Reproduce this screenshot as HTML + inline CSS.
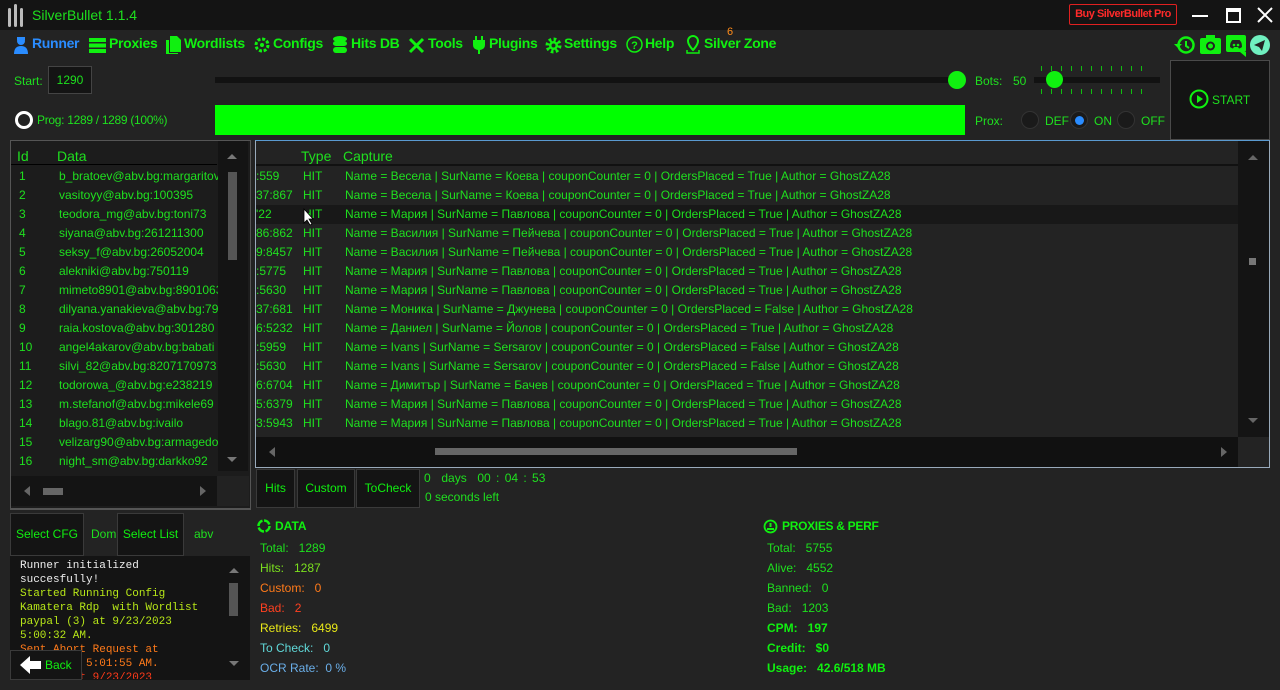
<!DOCTYPE html>
<html><head><meta charset="utf-8"><style>
*{box-sizing:border-box;margin:0;padding:0}
body{width:1280px;height:690px;background:#232323;font-family:"Liberation Sans","DejaVu Sans",sans-serif;color:#1fe01f;position:relative;overflow:hidden;font-size:12px}
.a{position:absolute;white-space:nowrap}
.nav{top:35px;font-weight:bold;font-size:14px;color:#10f010;letter-spacing:-0.3px}
.rows div{height:19px;line-height:19px}
.btn{position:absolute;background:#141414;border:1px solid #3a3a3a;color:#10f010;text-align:center;font-size:12px}
.radio{position:absolute;width:18px;height:18px;border-radius:50%;background:#1a1a1a;border:1px solid #333;top:111px}
.st div{height:20px;line-height:20px;font-size:12px}
.log div{height:14px;line-height:14px}
</style></head><body>
<div class="a" style="left:0;top:0;width:1280px;height:30px;background:#141414"></div>
<svg class="a" style="left:6px;top:3px" width="20" height="24"><g fill="#bbb"><rect x="2" y="5" width="3" height="19" rx="1.5"/><rect x="8" y="1" width="3" height="23" rx="1.5"/><rect x="14" y="5" width="3" height="19" rx="1.5"/></g></svg>
<div class="a" style="left:32px;top:7px;font-size:14px;color:#1ee01e">SilverBullet 1.1.4</div>
<div class="a" style="left:1069px;top:4px;width:108px;height:21px;border:1px solid #e02020;border-radius:2px;color:#ff2a2a;font-weight:bold;font-size:11px;line-height:19px;text-align:center;letter-spacing:-0.5px">Buy SilverBullet Pro</div>
<div class="a" style="left:1192px;top:15px;width:16px;height:2px;background:#fff"></div>
<div class="a" style="left:1226px;top:8px;width:15px;height:15px;border:2px solid #fff;border-top-width:4px"></div>
<svg class="a" style="left:1257px;top:7px" width="16" height="16"><path d="M1 1L15 15M15 1L1 15" stroke="#fff" stroke-width="2"/></svg>
<svg class="a" style="left:13px;top:36px" width="16" height="18"><circle cx="8" cy="5" r="4" fill="#2a8cff"/><rect x="4" y="1" width="8" height="3" fill="#2a8cff"/><path d="M1 18Q1 10 8 10Q15 10 15 18Z" fill="#2a8cff"/></svg>
<div class="a nav" style="left:32px;color:#2a8cff">Runner</div>
<svg class="a" style="left:89px;top:38px" width="17" height="15"><g fill="#10f010"><rect y="0" width="17" height="4"/><rect y="5.5" width="17" height="4"/><rect y="11" width="17" height="4"/></g></svg>
<div class="a nav" style="left:109px">Proxies</div>
<svg class="a" style="left:166px;top:36px" width="15" height="18"><path d="M4 0h7l4 4v12H4z M0 4h3v13h9v1H0z" fill="#10f010"/></svg>
<div class="a nav" style="left:184px">Wordlists</div>
<svg class="a" style="left:254px;top:37px" width="16" height="16"><circle cx="8" cy="8" r="6" fill="none" stroke="#10f010" stroke-width="3" stroke-dasharray="3 1.7"/><circle cx="8" cy="8" r="2" fill="#10f010"/></svg>
<div class="a nav" style="left:273px">Configs</div>
<svg class="a" style="left:333px;top:36px" width="14" height="18"><g fill="#10f010"><ellipse cx="7" cy="3" rx="7" ry="3"/><rect y="5" width="14" height="5" rx="3"/><rect y="11" width="14" height="6" rx="3"/></g></svg>
<div class="a nav" style="left:351px">Hits DB</div>
<svg class="a" style="left:408px;top:37px" width="17" height="17"><path d="M2 2L15 15M15 2L2 15" stroke="#10f010" stroke-width="3"/></svg>
<div class="a nav" style="left:428px">Tools</div>
<svg class="a" style="left:472px;top:36px" width="14" height="18"><path d="M4 0v4M10 0v4" stroke="#10f010" stroke-width="2"/><path d="M1 4h12v5q0 4-5 5v4H6v-4q-5-1-5-5z" fill="#10f010"/></svg>
<div class="a nav" style="left:489px">Plugins</div>
<svg class="a" style="left:545px;top:37px" width="17" height="17"><circle cx="8.5" cy="8.5" r="6" fill="none" stroke="#10f010" stroke-width="4" stroke-dasharray="2.5 2.2"/><circle cx="8.5" cy="8.5" r="4.5" fill="#10f010"/><circle cx="8.5" cy="8.5" r="2" fill="#232323"/></svg>
<div class="a nav" style="left:564px">Settings</div>
<svg class="a" style="left:626px;top:36px" width="17" height="17"><circle cx="8.5" cy="8.5" r="7.5" fill="none" stroke="#10f010" stroke-width="1.5"/><text x="8.5" y="13" font-size="11" font-weight="bold" fill="#10f010" text-anchor="middle" font-family="Liberation Sans">?</text></svg>
<div class="a nav" style="left:645px">Help</div>
<svg class="a" style="left:686px;top:35px" width="14" height="19"><path d="M7 1a5 5 0 0 1 5 5c0 4-5 9-5 9s-5-5-5-9a5 5 0 0 1 5-5z" fill="none" stroke="#10f010" stroke-width="2"/><path d="M1 15v3h12v-3" fill="none" stroke="#10f010" stroke-width="1.5"/></svg>
<div class="a nav" style="left:704px">Silver Zone</div>
<div class="a" style="left:727px;top:26px;color:#ff8c1a;font-size:11px">6</div>
<svg class="a" style="left:1174px;top:35px" width="22" height="20"><circle cx="12" cy="10" r="7.5" fill="none" stroke="#10f010" stroke-width="2.5"/><path d="M12 6v5l3 2" stroke="#10f010" stroke-width="2" fill="none"/><path d="M0 9l4 4 4-4z" fill="#10f010"/></svg>
<svg class="a" style="left:1200px;top:35px" width="21" height="19"><rect x="0" y="3" width="21" height="16" rx="2" fill="#10f010"/><rect x="6" y="0" width="9" height="4" fill="#10f010"/><circle cx="10.5" cy="11" r="4.5" fill="#232323"/><circle cx="10.5" cy="11" r="2.5" fill="#10f010"/></svg>
<svg class="a" style="left:1226px;top:35px" width="20" height="22"><rect width="20" height="17" rx="2" fill="#10f010"/><path d="M14 17l6 5v-5z" fill="#10f010"/><path d="M4 12q0-5 2.5-7h7q2.5 2 2.5 7-2 1.5-3 1.5l-1-1.5h-4l-1 1.5q-1 0-3-1.5z" fill="#232323"/><circle cx="8" cy="10" r="1.3" fill="#10f010"/><circle cx="12" cy="10" r="1.3" fill="#10f010"/></svg>
<svg class="a" style="left:1250px;top:35px" width="20" height="20"><circle cx="10" cy="10" r="10" fill="#70f0c0"/><path d="M4 10l11-5-3 11-3-4z" fill="#232323"/></svg>
<div class="a" style="left:14px;top:74px;font-size:12px">Start:</div>
<div class="a" style="left:48px;top:66px;width:44px;height:28px;background:#141414;border:1px solid #444;color:#1ee01e;font-size:12px;line-height:26px;text-align:center">1290</div>
<div class="a" style="left:215px;top:77px;width:745px;height:6px;background:#121212"></div>
<div class="a" style="left:948px;top:71px;width:18px;height:18px;border-radius:50%;background:#10f010"></div>
<div class="a" style="left:975px;top:74px;font-size:12px">Bots:</div>
<div class="a" style="left:1013px;top:74px;font-size:12px">50</div>
<div class="a" style="left:1034px;top:77px;width:126px;height:6px;background:#121212"></div>
<div class="a" style="left:1041px;top:66px;width:110px;height:5px;background:repeating-linear-gradient(90deg,#10c010 0 1px,transparent 1px 10px)"></div>
<div class="a" style="left:1041px;top:89px;width:110px;height:5px;background:repeating-linear-gradient(90deg,#10c010 0 1px,transparent 1px 10px)"></div>
<div class="a" style="left:1046px;top:71px;width:17px;height:17px;border-radius:50%;background:#10f010"></div>
<div class="a" style="left:1170px;top:60px;width:100px;height:80px;background:#141414;border:1px solid #4a4a4a"></div>
<svg class="a" style="left:1189px;top:89px" width="20" height="20"><circle cx="10" cy="10" r="8.5" fill="none" stroke="#10f010" stroke-width="2"/><path d="M8 6l6 4-6 4z" fill="#10f010"/></svg>
<div class="a" style="left:1212px;top:93px;font-size:12px">START</div>
<div class="a" style="left:15px;top:111px;width:18px;height:18px;border-radius:50%;border:3px solid #fff"></div>
<div class="a" style="left:37px;top:113px;font-size:12px;letter-spacing:-0.3px">Prog: 1289 / 1289 (100%)</div>
<div class="a" style="left:215px;top:105px;width:750px;height:30px;background:#00ff00"></div>
<div class="a" style="left:975px;top:114px;font-size:12px">Prox:</div>
<div class="radio" style="left:1021px"></div><div class="a" style="left:1045px;top:114px">DEF</div>
<div class="radio" style="left:1070px"></div><div class="a" style="left:1075px;top:116px;width:9px;height:9px;border-radius:50%;background:#2a8cff"></div><div class="a" style="left:1094px;top:114px">ON</div>
<div class="radio" style="left:1117px"></div><div class="a" style="left:1141px;top:114px">OFF</div>
<div class="a" style="left:10px;top:140px;width:241px;height:369px;background:#1c1c1c;border:1px solid #555"></div>
<div class="a" style="left:218px;top:141px;width:30px;height:330px;background:#141414"></div>
<div class="a" style="left:228px;top:172px;width:9px;height:88px;background:#555"></div>
<svg class="a" style="left:226px;top:152px" width="12" height="8"><path d="M1 7l5-5 5 5z" fill="#777"/></svg>
<svg class="a" style="left:226px;top:456px" width="12" height="8"><path d="M1 1l5 5 5-5z" fill="#777"/></svg>
<div class="a" style="left:11px;top:164px;width:206px;height:1px;background:#000"></div>
<div class="a" style="left:17px;top:148px;font-size:14px">Id</div>
<div class="a" style="left:57px;top:148px;font-size:14px">Data</div>
<div class="a rows" style="left:19px;top:167px;width:200px;height:304px;overflow:hidden;font-size:12px">
<div>1</div><div>2</div><div>3</div><div>4</div><div>5</div><div>6</div><div>7</div><div>8</div><div>9</div><div>10</div><div>11</div><div>12</div><div>13</div><div>14</div><div>15</div><div>16</div><div>17</div></div>
<div class="a rows" style="left:59px;top:167px;width:159px;height:304px;overflow:hidden;font-size:12px">
<div>b_bratoev@abv.bg:margaritov</div><div>vasitoyy@abv.bg:100395</div><div>teodora_mg@abv.bg:toni73</div><div>siyana@abv.bg:261211300</div><div>seksy_f@abv.bg:26052004</div><div>alekniki@abv.bg:750119</div><div>mimeto8901@abv.bg:8901063</div><div>dilyana.yanakieva@abv.bg:796</div><div>raia.kostova@abv.bg:301280</div><div>angel4akarov@abv.bg:babati</div><div>silvi_82@abv.bg:8207170973</div><div>todorowa_@abv.bg:e238219</div><div>m.stefanof@abv.bg:mikele69</div><div>blago.81@abv.bg:ivailo</div><div>velizarg90@abv.bg:armagedon</div><div>night_sm@abv.bg:darkko92</div><div>Bafa1a@abv.bg:bat</div></div>
<div class="a" style="left:11px;top:476px;width:206px;height:30px;background:#141414"></div>
<div class="a" style="left:217px;top:476px;width:32px;height:30px;background:#222"></div>
<svg class="a" style="left:23px;top:486px" width="8" height="10"><path d="M7 0v10L1 5z" fill="#666"/></svg>
<svg class="a" style="left:199px;top:486px" width="8" height="10"><path d="M1 0v10l6-5z" fill="#666"/></svg>
<div class="a" style="left:43px;top:488px;width:20px;height:7px;background:#666"></div>
<div class="a" style="left:10px;top:508px;width:241px;height:2px;background:#555"></div>
<div class="a" style="left:255px;top:140px;width:1015px;height:328px;background:#232323;border:1px solid #9ab;border-top-color:#5a9ad0"></div>
<div class="a" style="left:1238px;top:141px;width:31px;height:296px;background:#141414"></div>
<svg class="a" style="left:1247px;top:153px" width="12" height="8"><path d="M1 7l5-5 5 5z" fill="#666"/></svg>
<svg class="a" style="left:1247px;top:417px" width="12" height="8"><path d="M1 1l5 5 5-5z" fill="#666"/></svg>
<div class="a" style="left:1249px;top:258px;width:7px;height:7px;background:#777"></div>
<div class="a" style="left:256px;top:164px;width:982px;height:2px;background:#111"></div>
<div class="a" style="left:256px;top:205px;width:982px;height:19px;background:#181818"></div>
<div class="a" style="left:301px;top:148px;font-size:14px">Type</div>
<div class="a" style="left:343px;top:148px;font-size:14px">Capture</div>
<div class="a rows" style="left:256px;top:167px;width:45px;overflow:hidden;font-size:12px">
<div>:559</div><div>37:867</div><div>'22</div><div>86:862</div><div>9:8457</div><div>:5775</div><div>:5630</div><div>37:681</div><div>6:5232</div><div>:5959</div><div>:5630</div><div>6:6704</div><div>5:6379</div><div>3:5943</div></div>
<div class="a rows" style="left:303px;top:167px;font-size:12px"><div>HIT</div><div>HIT</div><div>HIT</div><div>HIT</div><div>HIT</div><div>HIT</div><div>HIT</div><div>HIT</div><div>HIT</div><div>HIT</div><div>HIT</div><div>HIT</div><div>HIT</div><div>HIT</div></div>
<div class="a rows" style="left:345px;top:167px;font-size:12px">
<div>Name = Весела | SurName = Коева | couponCounter = 0 | OrdersPlaced = True | Author = GhostZA28</div>
<div>Name = Весела | SurName = Коева | couponCounter = 0 | OrdersPlaced = True | Author = GhostZA28</div>
<div>Name = Мария | SurName = Павлова | couponCounter = 0 | OrdersPlaced = True | Author = GhostZA28</div>
<div>Name = Василия | SurName = Пейчева | couponCounter = 0 | OrdersPlaced = True | Author = GhostZA28</div>
<div>Name = Василия | SurName = Пейчева | couponCounter = 0 | OrdersPlaced = True | Author = GhostZA28</div>
<div>Name = Мария | SurName = Павлова | couponCounter = 0 | OrdersPlaced = True | Author = GhostZA28</div>
<div>Name = Мария | SurName = Павлова | couponCounter = 0 | OrdersPlaced = True | Author = GhostZA28</div>
<div>Name = Моника | SurName = Джунева | couponCounter = 0 | OrdersPlaced = False | Author = GhostZA28</div>
<div>Name = Даниел | SurName = Йолов | couponCounter = 0 | OrdersPlaced = True | Author = GhostZA28</div>
<div>Name = Ivans | SurName = Sersarov | couponCounter = 0 | OrdersPlaced = False | Author = GhostZA28</div>
<div>Name = Ivans | SurName = Sersarov | couponCounter = 0 | OrdersPlaced = False | Author = GhostZA28</div>
<div>Name = Димитър | SurName = Бачев | couponCounter = 0 | OrdersPlaced = True | Author = GhostZA28</div>
<div>Name = Мария | SurName = Павлова | couponCounter = 0 | OrdersPlaced = True | Author = GhostZA28</div>
<div>Name = Мария | SurName = Павлова | couponCounter = 0 | OrdersPlaced = True | Author = GhostZA28</div></div>
<svg class="a" style="left:303px;top:208px" width="12" height="18"><path d="M1 1v14l3-3 3 5 2-1-3-5h4z" fill="#fff" stroke="#000" stroke-width="0.8"/></svg>
<div class="a" style="left:256px;top:437px;width:982px;height:30px;background:#111"></div>
<div class="a" style="left:435px;top:448px;width:362px;height:7px;background:#666"></div>
<svg class="a" style="left:268px;top:447px" width="8" height="10"><path d="M7 0v10L1 5z" fill="#666"/></svg>
<svg class="a" style="left:1220px;top:447px" width="8" height="10"><path d="M1 0v10l6-5z" fill="#666"/></svg>
<div class="btn" style="left:256px;top:469px;width:39px;height:39px;line-height:37px">Hits</div>
<div class="btn" style="left:297px;top:469px;width:58px;height:39px;line-height:37px">Custom</div>
<div class="btn" style="left:356px;top:469px;width:64px;height:39px;line-height:37px">ToCheck</div>
<div class="a" style="left:424px;top:471px;font-size:12px;word-spacing:2px">0&nbsp; days&nbsp; 00 : 04 : 53</div>
<div class="a" style="left:425px;top:490px;font-size:12px">0 seconds left</div>
<div class="btn" style="left:10px;top:513px;width:74px;height:43px;line-height:41px">Select CFG</div>
<div class="a" style="left:91px;top:527px">Dom</div>
<div class="btn" style="left:117px;top:513px;width:67px;height:43px;line-height:41px">Select List</div>
<div class="a" style="left:194px;top:527px">abv</div>
<div class="a" style="left:10px;top:556px;width:240px;height:124px;background:#141414"></div>
<div class="a log" style="left:20px;top:559px;font-family:'Liberation Mono','DejaVu Sans Mono',monospace;font-size:11px;height:120px;overflow:hidden">
<div style="color:#eee">Runner initialized</div><div style="color:#eee">succesfully!</div>
<div style="color:#b8e818">Started Running Config</div><div style="color:#b8e818">Kamatera Rdp&nbsp; with Wordlist</div><div style="color:#b8e818">paypal (3) at 9/23/2023</div><div style="color:#b8e818">5:00:32 AM.</div>
<div style="color:#ff7a1a">Sent Abort Request at</div><div style="color:#ff7a1a">9/23/2023 5:01:55 AM.</div><div style="color:#ff3a1a">Aborted at 9/23/2023</div></div>
<div class="a" style="left:229px;top:583px;width:9px;height:33px;background:#555"></div>
<svg class="a" style="left:228px;top:566px" width="12" height="8"><path d="M1 7l5-5 5 5z" fill="#777"/></svg>
<svg class="a" style="left:228px;top:660px" width="12" height="8"><path d="M1 1l5 5 5-5z" fill="#777"/></svg>
<div class="btn" style="left:10px;top:650px;width:72px;height:30px"></div>
<svg class="a" style="left:19px;top:655px" width="24" height="20"><path d="M1 10L11 1v5h11v8H11v5z" fill="#fff"/></svg>
<div class="a" style="left:45px;top:658px;color:#10f010">Back</div>
<svg class="a" style="left:257px;top:519px" width="14" height="14"><circle cx="7" cy="7" r="5.5" fill="none" stroke="#10f010" stroke-width="2.5" stroke-dasharray="7 1.6"/></svg>
<div class="a" style="left:275px;top:519px;font-weight:bold;font-size:12px;color:#10f010">DATA</div>
<div class="a st" style="left:260px;top:538px">
<div style="color:#1ee01e">Total:&nbsp;&nbsp; 1289</div><div style="color:#7be01e">Hits:&nbsp;&nbsp; 1287</div><div style="color:#ff7a1a">Custom:&nbsp;&nbsp; 0</div><div style="color:#ff4020">Bad:&nbsp;&nbsp; 2</div><div style="color:#e8e818">Retries:&nbsp;&nbsp; 6499</div><div style="color:#60d8d8">To Check:&nbsp;&nbsp; 0</div><div style="color:#6aaee8">OCR Rate:&nbsp; 0 %</div></div>
<svg class="a" style="left:763px;top:519px" width="15" height="15"><circle cx="7.5" cy="7.5" r="6" fill="none" stroke="#10f010" stroke-width="1.8"/><path d="M7.5 4v4M4 10h7" stroke="#10f010" stroke-width="2"/></svg>
<div class="a" style="left:782px;top:519px;font-weight:bold;font-size:12px;color:#10f010;letter-spacing:-0.3px">PROXIES &amp; PERF</div>
<div class="a st" style="left:767px;top:538px;color:#1ee01e">
<div>Total:&nbsp;&nbsp; 5755</div><div>Alive:&nbsp;&nbsp; 4552</div><div>Banned:&nbsp;&nbsp; 0</div><div>Bad:&nbsp;&nbsp; 1203</div>
<div style="font-weight:bold;color:#10f010">CPM:&nbsp;&nbsp; 197</div><div style="font-weight:bold;color:#10f010">Credit:&nbsp;&nbsp; $0</div><div style="font-weight:bold;color:#10f010">Usage:&nbsp;&nbsp; 42.6/518 MB</div></div>
</body></html>
